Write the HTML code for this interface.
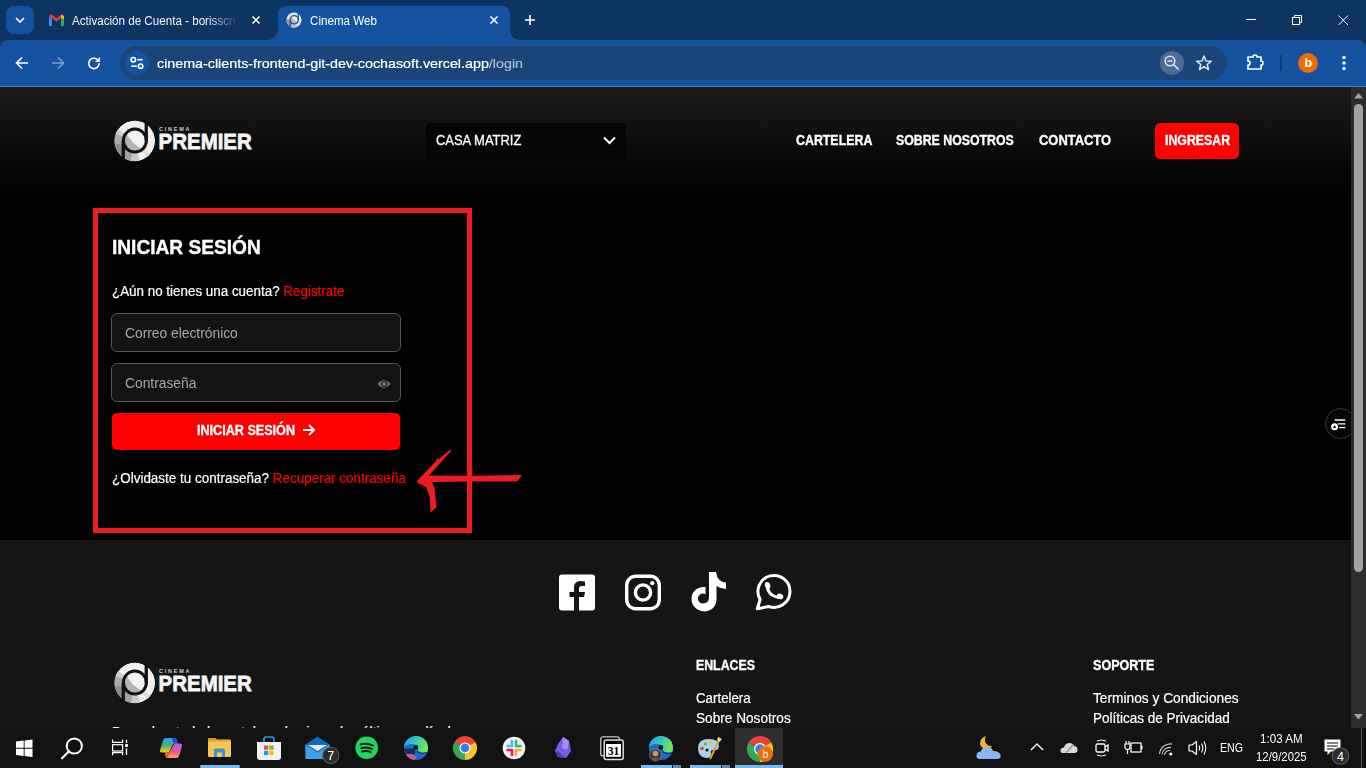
<!DOCTYPE html>
<html><head><meta charset="utf-8">
<style>
*{margin:0;padding:0;box-sizing:border-box}
html,body{width:1366px;height:768px;overflow:hidden;background:#000;font-family:"Liberation Sans",sans-serif}
.a{position:absolute;white-space:nowrap}
svg{position:absolute;overflow:visible}
#tabs{position:absolute;left:0;top:0;width:1366px;height:50px;background:#0e3461}
#toolbar{position:absolute;left:0;top:40px;width:1366px;height:46px;background:#1553a0;border-radius:8px 8px 0 0}
#tline{position:absolute;left:0;top:86px;width:1366px;height:1px;background:#4a80c4}
#omni{position:absolute;left:120px;top:46px;width:1107px;height:34px;background:#1b4478;border-radius:17px}
#page{position:absolute;left:0;top:87px;width:1351px;height:641px;background:#000;overflow:hidden}
#hdr{position:absolute;left:0;top:0;width:1351px;height:120px;background:linear-gradient(#1b1b1b,#000)}
#footer{position:absolute;left:0;top:453px;width:1351px;height:300px;background:#141414}
#sb{position:absolute;left:1351px;top:87px;width:15px;height:641px;background:#2c2c2c}
#task{position:absolute;left:0;top:728px;width:1366px;height:40px;background:#111}
.nav{color:#fff;font-weight:bold;font-size:14px;-webkit-text-stroke:0.35px #fff}
</style></head><body>
<div id="tabs"></div>
<!-- tab search -->
<div class="a" style="left:6px;top:6px;width:28px;height:28px;border-radius:8px;background:#1553a0"></div>
<svg style="left:0;top:0" width="40" height="40"><path d="M16 18 L20 22 L24 18" fill="none" stroke="#fff" stroke-width="1.6"/></svg>
<!-- inactive tab -->
<svg style="left:49px;top:14px" width="15" height="12" viewBox="0 0 15 12">
<path d="M0 2 V12 H3 V5 Z" fill="#4285f4"/><path d="M15 2 V12 H12 V5 Z" fill="#34a853"/>
<path d="M0 2 L7.5 7.5 L15 2 L13 0 L7.5 4.5 L2 0 Z" fill="#ea4335"/><path d="M12 1 L15 2 V5 L12 4Z" fill="#fbbc04"/></svg>
<div class="a" id="tab1" style="left:72px;top:14px;font-size:12.5px;color:#f0f4fa;width:184px;overflow:hidden;transform:scaleX(0.93);transform-origin:0 0;-webkit-mask-image:linear-gradient(90deg,#000 80%,transparent 97%)">Activación de Cuenta - borisscruz</div>
<svg style="left:0;top:0" width="300" height="40"><path d="M252.5 16.5 L259.5 23.5 M259.5 16.5 L252.5 23.5" stroke="#fff" stroke-width="1.5"/></svg>
<!-- active tab -->
<svg style="left:266px;top:6px" width="256" height="34" viewBox="0 0 256 34">
<path d="M0 34 Q12 34 12 22 V8 Q12 0 20 0 H236 Q244 0 244 8 V22 Q244 34 256 34 Z" fill="#1553a0"/></svg>
<svg style="left:286px;top:12px;overflow:hidden" width="16" height="16" viewBox="0 0 16 16">
<circle cx="8" cy="8" r="7.6" fill="#e6e6e6"/><path d="M8 8 L0.4 7 A7.6 7.6 0 0 0 6 15.4Z" fill="#9a9a9a"/><path d="M8 8 L4 14.5 A7.6 7.6 0 0 0 11 15Z" fill="#c0c0c0"/>
<circle cx="8.2" cy="7.8" r="4" fill="#b8b8b8"/><path d="M5.5 5 A4 4 0 0 1 11.5 10Z" fill="#f2f2f2"/>
<circle cx="8.2" cy="7.8" r="4.1" fill="none" stroke="#1553a0" stroke-width="1.3"/>
<rect x="3.5" y="7.8" width="1.3" height="7" fill="#1553a0"/><rect x="11.6" y="1" width="1.3" height="7" fill="#1553a0"/></svg>
<div class="a" id="tab2" style="left:310px;top:14px;font-size:12.5px;transform:scaleX(0.93);transform-origin:0 0;color:#fff">Cinema Web</div>
<svg style="left:0;top:0" width="560" height="40"><path d="M490.5 16.5 L497.5 23.5 M497.5 16.5 L490.5 23.5" stroke="#fff" stroke-width="1.5"/>
<path d="M525 20 H535 M530 15 V25" stroke="#fff" stroke-width="1.6"/></svg>
<!-- window controls -->
<svg style="left:1230px;top:0" width="136" height="40">
<path d="M16 19.5 H26" stroke="#fff" stroke-width="1"/>
<rect x="62.5" y="17.5" width="7" height="7" fill="none" stroke="#fff" stroke-width="1"/>
<path d="M64.5 17.5 V15.5 H71.5 V22.5 H69.5" fill="none" stroke="#fff" stroke-width="1"/>
<path d="M108.5 15.5 L118 25 M118 15.5 L108.5 25" stroke="#fff" stroke-width="1"/></svg>

<div id="toolbar"></div>
<div id="tline"></div>
<div id="omni"></div>
<!-- nav buttons -->
<svg style="left:0;top:40px" width="120" height="46">
<path d="M28 23 H17 M22 17.5 L16.5 23 L22 28.5" fill="none" stroke="#fff" stroke-width="1.6"/>
<path d="M52 23 H63 M58 17.5 L63.5 23 L58 28.5" fill="none" stroke="#7b9dcc" stroke-width="1.6"/>
<path d="M99.08 23.35 A5.2 5.2 0 1 1 97.3 19.5" fill="none" stroke="#fff" stroke-width="1.6"/>
<path d="M95 21.9 H99.9 V17 Z" fill="#fff"/></svg>
<div class="a" style="left:125px;top:51px;width:24px;height:24px;border-radius:12px;background:#1553a0"></div>
<svg style="left:125px;top:51px" width="24" height="24">
<circle cx="8.3" cy="8.7" r="2.2" fill="none" stroke="#fff" stroke-width="1.6"/><path d="M12.2 8.7 H17.7" stroke="#fff" stroke-width="1.6"/>
<circle cx="15.6" cy="15.2" r="2.2" fill="none" stroke="#fff" stroke-width="1.6"/><path d="M6.3 15.2 H11.8" stroke="#fff" stroke-width="1.6"/></svg>
<div class="a" id="url" style="left:157px;top:55.5px;font-size:13.5px;transform:scaleX(1.058);transform-origin:0 0;-webkit-text-stroke:0.2px currentColor;color:#fff">cinema-clients-frontend-git-dev-cochasoft.vercel.app<span id="url2" style="color:#a9bbd6">/login</span></div>
<!-- omnibox right -->
<div class="a" style="left:1160px;top:51px;width:24px;height:24px;border-radius:12px;background:#4b6a95"></div>
<svg style="left:1150px;top:40px" width="216" height="46">
<circle cx="20" cy="21" r="4.8" fill="none" stroke="#dfe6f0" stroke-width="1.6"/><path d="M17.5 21 H22.5" stroke="#dfe6f0" stroke-width="1.4"/>
<path d="M23.5 24.5 L28.5 29.5" stroke="#dfe6f0" stroke-width="1.7"/>
<path d="M54 16 L56 21 L61.3 21.2 L57.2 24.5 L58.6 29.6 L54 26.7 L49.4 29.6 L50.8 24.5 L46.7 21.2 L52 21 Z" fill="none" stroke="#dfe6f0" stroke-width="1.5" stroke-linejoin="round"/>
<path d="M98 17 H103 A2 2 0 0 1 107 17 H111 V21 A2 2 0 0 1 111 25 V29 H98 V25 A2 2 0 0 0 98 21 Z" fill="none" stroke="#fff" stroke-width="1.7" stroke-linejoin="round"/>
<path d="M131 15 V31" stroke="#0e3461" stroke-width="1.5"/>
<circle cx="158" cy="23" r="10" fill="#ef6c00"/>
<circle cx="194" cy="17.5" r="1.7" fill="#fff"/><circle cx="194" cy="23" r="1.7" fill="#fff"/><circle cx="194" cy="28.5" r="1.7" fill="#fff"/></svg>
<div class="a" style="left:1304.5px;top:56px;font-size:12.5px;font-weight:bold;color:#fff">b</div>

<svg width="0" height="0" style="position:absolute">
<defs>
<linearGradient id="lg1" x1="0" y1="0" x2="1" y2="1"><stop offset="0" stop-color="#fafafa"/><stop offset="1" stop-color="#d0d0d0"/></linearGradient>
<symbol id="logo" viewBox="0 0 142 42">
  <clipPath id="lclip"><circle cx="21.75" cy="20.9" r="20.35"/></clipPath>
  <clipPath id="iclip"><circle cx="21.9" cy="20.6" r="11"/></clipPath>
  <g clip-path="url(#lclip)"><circle cx="21.75" cy="20.9" r="20.35" fill="#efefef"/><path d="M21.75 20.9 L2.39 13.85 A20.6 20.6 0 0 1 5.08 8.79 Z" fill="#cdcdcd"/><path d="M21.75 20.9 L1.46 24.48 A20.6 20.6 0 0 1 2.39 13.85 Z" fill="#a9a9a9"/><path d="M21.75 20.9 L8.51 36.68 A20.6 20.6 0 0 1 1.46 24.48 Z" fill="#8e8e8e"/><path d="M21.75 20.9 L18.17 41.19 A20.6 20.6 0 0 1 8.51 36.68 Z" fill="#a2a2a2"/><path d="M21.75 20.9 L26.73 40.89 A20.6 20.6 0 0 1 18.17 41.19 Z" fill="#c9c9c9"/><path d="M21.75 20.9 L37.53 34.14 A20.6 20.6 0 0 1 34.43 37.13 Z" fill="#dadada"/></g>
  <g clip-path="url(#iclip)"><circle cx="21.9" cy="20.6" r="11.5" fill="#b3b3b3"/><circle cx="47" cy="-5" r="38.5" fill="#f3f3f3"/></g>
  <circle cx="21.9" cy="20.6" r="11.5" fill="none" stroke="#111" stroke-width="3"/>
  <rect x="8.6" y="20.6" width="3.3" height="19.5" fill="#111"/>
  <rect x="31.6" y="2" width="3.3" height="18.6" fill="#111"/>
  <text x="46" y="10.5" font-family="Liberation Sans" font-weight="bold" font-size="5.4" letter-spacing="1.85" fill="#cfcfcf">CINEMA</text>
  <text x="45.6" y="29.5" font-family="Liberation Sans" font-weight="bold" font-size="22.6" fill="#f5f5f5" stroke="#f5f5f5" stroke-width="0.75" transform="translate(45.6 0) scale(0.905 1) translate(-45.6 0)">PREMIER</text>
</symbol>
</defs></svg>

<div class="a" style="left:0;top:87px;width:1351px;height:453px;background:#000"></div>
<div class="a" style="left:0;top:87px;width:1351px;height:108px;background:linear-gradient(#1b1b1b,#000)"></div>
<div class="a" style="left:0;top:540px;width:1351px;height:188px;background:#151515"></div>

<!-- header -->
<svg style="left:113px;top:120px" width="142" height="42"><use href="#logo"/></svg>
<div class="a" style="left:426px;top:123px;width:200px;height:36px;background:#050505;border-radius:5px"></div>
<div class="a" id="casa" style="-webkit-text-stroke:0.3px #fff;left:436px;top:132px;transform:scaleX(0.924);transform-origin:0 0;font-size:14px;color:#fff">CASA MATRIZ</div>
<svg style="left:600px;top:132px" width="20" height="16"><path d="M4 5.5 L9.5 11 L15 5.5" fill="none" stroke="#fff" stroke-width="2"/></svg>
<div class="a nav" id="n1" style="left:796px;top:132px;transform:scaleX(0.884);transform-origin:0 0">CARTELERA</div>
<div class="a nav" id="n2" style="left:896px;top:132px;transform:scaleX(0.88);transform-origin:0 0">SOBRE NOSOTROS</div>
<div class="a nav" id="n3" style="left:1039px;top:132px;transform:scaleX(0.923);transform-origin:0 0">CONTACTO</div>
<div class="a" style="left:1155px;top:123px;width:84px;height:36px;background:#fe0000;border-radius:5px"></div>
<div class="a nav" id="n4" style="left:1164.5px;top:132px;transform:scaleX(0.88);transform-origin:0 0">INGRESAR</div>

<!-- login -->
<div class="a" style="left:93px;top:208px;width:379px;height:325px;border:5px solid #ec1c24"></div>
<div class="a" id="t1" style="-webkit-text-stroke:0.4px #fff;left:112px;top:236px;transform:scaleX(0.956);transform-origin:0 0;font-size:20px;font-weight:bold;color:#fff">INICIAR SESIÓN</div>
<div class="a" id="t2" style="-webkit-text-stroke:0.2px currentColor;left:112px;top:283px;transform:scaleX(0.957);transform-origin:0 0;font-size:14px;color:#fff">¿Aún no tienes una cuenta? <span style="color:#fe0000">Registrate</span></div>
<div class="a" style="left:111px;top:313px;width:290px;height:39px;background:#131313;border:1.5px solid #575757;border-radius:6px"></div>
<div class="a" id="ph1" style="left:125px;top:325px;transform:scaleX(0.986);transform-origin:0 0;font-size:14px;color:#a3a8b0">Correo electrónico</div>
<div class="a" style="left:111px;top:363px;width:290px;height:39px;background:#131313;border:1.5px solid #575757;border-radius:6px"></div>
<div class="a" id="ph2" style="left:125px;top:375px;transform:scaleX(0.986);transform-origin:0 0;font-size:14px;color:#a3a8b0">Contraseña</div>
<svg style="left:376px;top:376px" width="16" height="16" viewBox="0 0 16 16"><path d="M1.5 8 Q8 0.5 14.5 8 Q8 15.5 1.5 8 Z" fill="#6b7280"/><circle cx="8.3" cy="8" r="3" fill="#131313"/><circle cx="8.3" cy="8" r="2" fill="#6b7280"/></svg>
<div class="a" style="left:112px;top:413px;width:288px;height:37px;background:#fe0000;border-radius:5px"></div>
<div class="a nav" id="b1" style="left:196.5px;top:422px;transform:scaleX(0.9);transform-origin:0 0">INICIAR SESIÓN</div>
<svg style="left:300px;top:421px" width="18" height="18"><path d="M3 9 H14 M9 4 L14 9 L9 14" fill="none" stroke="#fff" stroke-width="2"/></svg>
<div class="a" id="t3" style="-webkit-text-stroke:0.2px currentColor;left:112px;top:470px;transform:scaleX(0.961);transform-origin:0 0;font-size:14px;color:#fff">¿Olvidaste tu contraseña? <span style="color:#fe0000">Recuperar contraseña</span></div>
<!-- hand drawn arrow -->
<svg style="left:400px;top:440px" width="140" height="80" viewBox="0 0 140 80">
<path d="M16.5 41.5 L36 21 L37.5 17.5 L38.5 19.5 L50 9.8 L51.5 10.5 L29 35.5 L70 35.8 L122 35 L117 41.5 L70 41.5 L32 42 L34.5 48 L36.5 67.5 L30.5 72.5 L29.5 56 L26 47 L19 43.5 Z" fill="#ec1c24"/>
</svg>
<!-- footer -->
<svg style="left:559px;top:574px" width="36" height="37" viewBox="0 0 36 37"><rect x="0" y="0.5" width="36" height="36" rx="3" fill="#fff"/><path d="M20 37 V23 H25 L26 18 H20 V14.5 Q20 12 23 12 H26 V7.5 Q24 7 21.5 7 Q15 7 15 13.5 V18 H10.5 V23 H15 V37 Z" fill="#151515"/></svg>
<svg style="left:625px;top:574px" width="36" height="37" viewBox="0 0 36 37"><rect x="1.7" y="2.2" width="32.6" height="32.6" rx="9" fill="none" stroke="#fff" stroke-width="3.4"/><circle cx="18" cy="18.5" r="7.6" fill="none" stroke="#fff" stroke-width="3.4"/><circle cx="27.3" cy="9.2" r="2.1" fill="#fff"/></svg>
<svg style="left:690px;top:571px" width="38" height="42" viewBox="0 0 38 42"><path d="M19 1 H26 Q26.5 6 29.5 9 Q32.5 11.5 36 11.5 V18 Q31 18 26.5 15 V28 Q26.5 35 21 38.5 Q15 42 8.5 39 Q1 35 1.5 27 Q2 20 8.5 17 Q12 15.5 15.5 16 V23 Q12 22 10 23.5 Q7.5 25.5 8 28.5 Q9 32.5 13 32.5 Q19 32.5 19 26 Z" fill="#fff"/></svg>
<svg style="left:755px;top:573px" width="38" height="38" viewBox="0 0 38 38"><path d="M2.3 35.8 L5.14 26.5 A16 16 0 1 1 13.5 33.5 Z" fill="none" stroke="#fff" stroke-width="3" stroke-linejoin="round"/>
<path d="M12.3 13.5 Q13 22.5 23.5 24.5" fill="none" stroke="#fff" stroke-width="3.2" stroke-linecap="round"/>
<ellipse cx="12.6" cy="12.4" rx="2.6" ry="3.4" transform="rotate(-25 12.6 12.4)" fill="#fff"/>
<ellipse cx="25" cy="23.4" rx="3.4" ry="2.6" transform="rotate(25 25 23.4)" fill="#fff"/></svg>

<svg style="left:113px;top:662px" width="142" height="42"><use href="#logo"/></svg>
<div class="a" id="f0" style="-webkit-text-stroke:0.2px currentColor;left:112px;top:724px;font-size:14px;color:#fff">Descubre toda la cartelera de cine y las últimas películas</div>
<div class="a" id="f1" style="-webkit-text-stroke:0.35px #fff;left:696px;top:657px;transform:scaleX(0.88);transform-origin:0 0;font-size:14px;font-weight:bold;color:#fff">ENLACES</div>
<div class="a" id="f2" style="-webkit-text-stroke:0.2px currentColor;left:696px;top:690px;transform:scaleX(0.95);transform-origin:0 0;font-size:14px;color:#fff">Cartelera</div>
<div class="a" id="f3" style="-webkit-text-stroke:0.2px currentColor;left:696px;top:710px;transform:scaleX(0.974);transform-origin:0 0;font-size:14px;color:#fff">Sobre Nosotros</div>
<div class="a" id="f4" style="-webkit-text-stroke:0.35px #fff;left:1093px;top:657px;transform:scaleX(0.897);transform-origin:0 0;font-size:14px;font-weight:bold;color:#fff">SOPORTE</div>
<div class="a" id="f5" style="-webkit-text-stroke:0.2px currentColor;left:1093px;top:690px;transform:scaleX(0.98);transform-origin:0 0;font-size:14px;color:#fff">Terminos y Condiciones</div>
<div class="a" id="f6" style="-webkit-text-stroke:0.2px currentColor;left:1093px;top:710px;transform:scaleX(0.965);transform-origin:0 0;font-size:14px;color:#fff">Políticas de Privacidad</div>

<!-- floating button -->
<div class="a" style="left:1325px;top:408px;width:31px;height:31px;border-radius:16px;background:#050505;border:1px solid #3a3a3a"></div>
<svg style="left:1325px;top:408px" width="31" height="31"><path d="M9.7 12 H20.3 M13 15.8 H20.3 M14.3 19.7 H20.3" stroke="#fff" stroke-width="1.3"/><circle cx="9.6" cy="18.7" r="3.5" fill="#fff"/><path d="M9.6 16.9 L11.2 19.9 H8 Z" fill="#000"/></svg>
<!-- scrollbar -->
<div class="a" style="left:1351px;top:87px;width:15px;height:641px;background:#2c2c2c"></div>
<svg style="left:1351px;top:87px" width="15" height="641"><path d="M3 11.5 L7.5 6 L12 11.5 Z" fill="#a3a3a3"/><path d="M3 627 L12 627 L7.5 632.5 Z" fill="#a3a3a3"/></svg>
<div class="a" style="left:1354px;top:104px;width:9px;height:468px;border-radius:4.5px;background:#a3a3a3"></div>

<div class="a" style="left:0;top:728px;width:1366px;height:40px;background:#121212"></div>
<!-- start -->
<svg style="left:16px;top:740px" width="17" height="17" viewBox="0 0 17 17"><path d="M0 1.6 L7.7 0.6 V7.8 H0 Z M8.6 0.5 L16.5 -0.5 V7.8 H8.6 Z M0 8.7 H7.7 V15.9 L0 14.9 Z M8.6 8.7 H16.5 V17 L8.6 16 Z" fill="#fff"/></svg>
<!-- search -->
<svg style="left:58px;top:734px" width="28" height="28"><circle cx="16.3" cy="12" r="7.6" fill="none" stroke="#fff" stroke-width="2"/><path d="M10.8 17.5 L4 24.3" stroke="#fff" stroke-width="2.2" stroke-linecap="round"/></svg>
<!-- task view -->
<svg style="left:110px;top:738px" width="20" height="20"><path d="M2.6 1.6 V4.3 H12.6 V1.6 M2.6 17.2 V14.7 H12.6 V17.2" fill="none" stroke="#fff" stroke-width="1.2"/><rect x="2.6" y="6.7" width="10" height="6.3" fill="none" stroke="#fff" stroke-width="1.2"/><path d="M16.5 1.8 V5 M16.5 10.2 V17" stroke="#fff" stroke-width="1.3"/><rect x="15.1" y="6.1" width="2.9" height="2.8" fill="#fff"/></svg>
<!-- copilot -->
<svg style="left:155px;top:733px" width="32" height="30" viewBox="0 0 32 30">
<defs><linearGradient id="cpa" x1="0" y1="0" x2="0" y2="1"><stop offset="0" stop-color="#1ea4f2"/><stop offset=".5" stop-color="#43b37a"/><stop offset="1" stop-color="#f5d300"/></linearGradient>
<linearGradient id="cpb" x1="0" y1="0" x2="0" y2="1"><stop offset="0" stop-color="#b05ff0"/><stop offset=".55" stop-color="#f0568f"/><stop offset="1" stop-color="#fba35a"/></linearGradient></defs>
<path d="M10 5 H19.5 Q21.5 5 22 7 L22.5 10.5 H18.5 L14 19.5 H7 Q4.5 19.5 5 17 L8 7.5 Q8.6 5 10 5 Z" fill="url(#cpa)"/>
<path d="M17 5 H19.5 Q21.5 5 22 7 L22.5 10.5 H18.5 Z" fill="#1b4fd8"/>
<path d="M19.5 10.5 H25 Q27.5 10.5 27 13 L24 23 Q23.3 25 21.5 25 H12.5 Q11 25 10.5 23 L10 19.5 H14.5 Z" fill="url(#cpb)"/>
<path d="M10 19.5 H14.5 L13 25 H12.5 Q11 25 10.5 23 Z" fill="#f0583a"/></svg>
<!-- explorer -->
<svg style="left:208px;top:738px" width="23" height="19" viewBox="0 0 23 19"><path d="M0 1.5 Q0 0 1.5 0 H7 L9 1.5 H21.5 Q23 1.5 23 3 V17.5 Q23 19 21.5 19 H1.5 Q0 19 0 17.5Z" fill="#f6c94e"/><path d="M0 3 H23" stroke="#e0a82e" stroke-width="1.5"/><path d="M0 1.5 Q0 0 1.5 0 H7 L9 2.5 H0Z" fill="#d99b1b"/><path d="M6 19 V12 Q6 10.5 7.5 10.5 H15.5 Q17 10.5 17 12 V19 H14 V14.5 H9 V19Z" fill="#3f8fdd"/></svg>
<div class="a" style="left:200px;top:765px;width:40px;height:3px;background:#76b9ed;border-radius:1.5px"></div>
<!-- store -->
<svg style="left:257px;top:736px" width="24" height="25" viewBox="0 0 24 25"><path d="M7 6 V3 Q7 1 9 1 H15 Q17 1 17 3 V6" fill="none" stroke="#1e9ee8" stroke-width="1.6"/><path d="M0 6 H24 V21 Q24 24 21 24 H3 Q0 24 0 21Z" fill="#f2f2f2"/><rect x="7" y="9.5" width="4.3" height="4.3" fill="#f35325"/><rect x="12.3" y="9.5" width="4.3" height="4.3" fill="#81bc06"/><rect x="7" y="14.8" width="4.3" height="4.3" fill="#05a6f0"/><rect x="12.3" y="14.8" width="4.3" height="4.3" fill="#ffba08"/></svg>
<!-- mail -->
<svg style="left:305px;top:736px" width="36" height="30" viewBox="0 0 36 30"><path d="M0.5 8.5 L12.5 0.5 L24.5 8.5 V23 H0.5Z" fill="#0f6cbd"/><path d="M3 9 H22 L12.5 15Z" fill="#e8e8e8"/><path d="M0.5 8.5 L12.5 16.5 L24.5 8.5 V23 H0.5Z" fill="#3aa3ec"/>
<circle cx="25.8" cy="19.4" r="8.1" fill="#2b2b2b" stroke="#5a5a5a" stroke-width="1.1"/><text x="25.8" y="24" text-anchor="middle" font-family="Liberation Sans" font-size="12.5" fill="#fff">7</text></svg>
<!-- spotify -->
<svg style="left:355px;top:736px" width="24" height="24"><circle cx="11.7" cy="11.8" r="11.3" fill="#1ed760"/><path d="M5.5 8.5 Q12 6.5 18 9.5 M6.3 12.2 Q12 10.5 17 13 M7 15.5 Q11.5 14.2 15.8 16.2" fill="none" stroke="#121212" stroke-width="1.9" stroke-linecap="round"/></svg>
<!-- edge -->
<svg style="left:400px;top:732px" width="32" height="32" viewBox="0 0 32 32">
<defs><linearGradient id="eg1" x1="0" y1="0" x2="1" y2="0.3"><stop offset="0" stop-color="#2a9fe6"/><stop offset=".5" stop-color="#2fc3c8"/><stop offset="1" stop-color="#74e35a"/></linearGradient>
<clipPath id="edc"><circle cx="16" cy="16" r="12"/></clipPath></defs>
<g clip-path="url(#edc)">
<rect x="4" y="4" width="24" height="24" fill="#1a6bd0"/>
<path d="M4 4 H28 V20 Q25 21 21.5 20.5 Q17.5 19.5 17.5 16 Q17 12.5 12.5 12 Q7 12 4 15 Z" fill="url(#eg1)"/>
<path d="M17 19.5 Q19.5 21.5 23 21.3 Q26 21 28 20.5" fill="none" stroke="#0a2a5a" stroke-width="1"/>
<circle cx="15.9" cy="15.4" r="2.3" fill="#0b0b0b"/>
<rect x="4" y="16.5" width="11" height="6" fill="#1e2d58"/>
<ellipse cx="9.5" cy="25.5" rx="6.5" ry="3.5" fill="#d25a94"/>
</g></svg>
<!-- chrome -->
<svg style="left:453px;top:736px" width="24" height="24" viewBox="0 0 24 24">
<path d="M12 12 L1.6 6 A12 12 0 0 1 22.4 6 Z" fill="#ea4335"/>
<path d="M12 12 L22.4 6 A12 12 0 0 1 12 24 Z" fill="#fbc02d"/>
<path d="M12 12 L12 24 A12 12 0 0 1 1.6 6 Z" fill="#34a853"/>
<circle cx="12" cy="12" r="5.6" fill="#fff"/><circle cx="12" cy="12" r="4.4" fill="#3b7cf0"/></svg>
<!-- slack -->
<svg style="left:502px;top:736px" width="24" height="24" viewBox="0 0 24 24"><circle cx="12" cy="12" r="11.3" fill="#f2f2f2"/>
<path d="M10 5 V10 M5.5 10 H10" stroke="#36c5f0" stroke-width="2.6" stroke-linecap="round"/>
<path d="M14 5 V10 M14 10 H18.5" stroke="#2eb67d" stroke-width="2.6" stroke-linecap="round"/>
<path d="M14 14 H18.5 M14 14 V19" stroke="#ecb22e" stroke-width="2.6" stroke-linecap="round"/>
<path d="M10 14 V19 M5.5 14 H10" stroke="#e01e5a" stroke-width="2.6" stroke-linecap="round"/></svg>
<!-- obsidian -->
<svg style="left:554px;top:736px" width="18" height="24" viewBox="0 0 18 24"><path d="M9 1 L15 5 L17 15 L12 22 L4 21 L1 15 L4 8Z" fill="#7b5ce0"/><path d="M9 1 L15 5 L13 14 L8 12Z" fill="#a88bf5"/><path d="M4 15 L12 22 L4 21 L1 15Z" fill="#5a3bbf"/></svg>
<!-- calendar -->
<svg style="left:596px;top:733px" width="32" height="30" viewBox="0 0 32 30"><rect x="4.8" y="3.8" width="18.5" height="19" rx="2" fill="#000" stroke="#cfcfcf" stroke-width="1.3"/><rect x="8.2" y="7" width="19" height="19.5" rx="2" fill="#000" stroke="#e0e0e0" stroke-width="1.5"/><rect x="10" y="11" width="15" height="12.8" fill="#fff"/><text x="17.5" y="22" text-anchor="middle" font-family="Liberation Serif" font-weight="bold" font-size="11.5" fill="#000">31</text></svg>
<!-- edge 2 -->
<svg style="left:645px;top:732px" width="32" height="32" viewBox="0 0 32 32">
<g clip-path="url(#edc)">
<rect x="4" y="4" width="24" height="24" fill="#1a6bd0"/>
<path d="M4 4 H28 V20 Q25 21 21.5 20.5 Q17.5 19.5 17.5 16 Q17 12.5 12.5 12 Q7 12 4 15 Z" fill="url(#eg1)"/>
<path d="M17 19.5 Q19.5 21.5 23 21.3 Q26 21 28 20.5" fill="none" stroke="#0a2a5a" stroke-width="1"/>
<circle cx="15.9" cy="15.4" r="2.3" fill="#0b0b0b"/>
</g>
<circle cx="10.5" cy="23" r="6" fill="#3a3a3a" stroke="#8a8a8a" stroke-width=".7"/><circle cx="10.5" cy="21.5" r="2.8" fill="#c4957a"/><path d="M6 27.5 Q10.5 23 15 27.5 Q10.5 29.5 6 27.5Z" fill="#7a4a38"/></svg>
<div class="a" style="left:641px;top:765px;width:31px;height:3px;background:#76b9ed"></div>
<div class="a" style="left:673px;top:765px;width:8px;height:3px;background:#5a8ab5"></div>
<!-- paint -->
<svg style="left:697px;top:736px" width="25" height="25" viewBox="0 0 25 25"><path d="M12 3 Q22 3 22 10 Q22 15 16 14 Q13 14 14 18 Q14 22 9 22 Q1 21 1 12 Q1 3 12 3Z" fill="#a8d4f0"/><circle cx="5" cy="12.5" r="1.8" fill="#e53935"/><circle cx="8.5" cy="8" r="1.8" fill="#7cb342"/><circle cx="13.5" cy="6.5" r="1.8" fill="#fbc02d"/><circle cx="10" cy="14" r="1.5" fill="#121212"/><path d="M23 2 L13 23" stroke="#e39b3a" stroke-width="2"/><path d="M21 1 L25 3 L22.5 6 L20 4.5Z" fill="#f3d28a"/></svg>
<div class="a" style="left:690px;top:765px;width:31px;height:3px;background:#76b9ed"></div>
<div class="a" style="left:722px;top:765px;width:8px;height:3px;background:#5a8ab5"></div>
<!-- chrome active -->
<div class="a" style="left:735px;top:728px;width:48px;height:40px;background:#2d2d2d"></div>
<div class="a" style="left:735px;top:765px;width:48px;height:3px;background:#76b9ed"></div>
<svg style="left:747px;top:736px" width="26" height="26" viewBox="0 0 24 24">
<path d="M12 12 L1.6 6 A12 12 0 0 1 22.4 6 Z" fill="#ea4335"/>
<path d="M12 12 L22.4 6 A12 12 0 0 1 12 24 Z" fill="#fbc02d"/>
<path d="M12 12 L12 24 A12 12 0 0 1 1.6 6 Z" fill="#34a853"/>
<circle cx="12" cy="12" r="5.6" fill="#fff"/><circle cx="12" cy="12" r="4.4" fill="#3b7cf0"/></svg>
<svg style="left:757px;top:746px" width="17" height="17"><circle cx="8.3" cy="8" r="7.8" fill="#e8710a"/><text x="8.3" y="11.8" text-anchor="middle" font-family="Liberation Sans" font-size="10.5" fill="#fff">b</text></svg>

<!-- tray -->
<svg style="left:975px;top:735px" width="28" height="26" viewBox="0 0 28 26"><path d="M11 1 Q5 3 5 9 Q6 14 12 14 Q16 14 17 11 Q11 11 10 6 Q10 3 11 1Z" fill="#f5b02e"/><path d="M5 24 Q1 24 1.5 20 Q2 16.5 6 16.5 Q7 12 12 12 Q17 12 18 16 Q23 15.5 25.5 19.5 Q26.5 24 22 24Z" fill="#8ab9f1"/></svg>
<svg style="left:1028px;top:740px" width="18" height="14"><path d="M3 10 L9 4 L15 10" fill="none" stroke="#fff" stroke-width="1.3"/></svg>
<svg style="left:1060px;top:740px" width="19" height="15"><path d="M3 13 Q0 13 0.5 10 Q1 7.5 4 7.5 Q5 3 9.5 3 Q13 3 14 6 Q17.5 6 17.5 10 Q17.5 13 14.5 13Z" fill="#d8d8d8"/><path d="M6 13 L13 5" stroke="#9a9a9a" stroke-width="1.5"/></svg>
<svg style="left:1094px;top:739px" width="16" height="18"><rect x="2" y="5" width="9" height="8" rx="1.5" fill="none" stroke="#fff" stroke-width="1.3"/><path d="M11 8 L14 6 V12 L11 10" fill="none" stroke="#fff" stroke-width="1.3"/><path d="M3 2 Q7.5 0 12 2 M3 16 Q7.5 18 12 16" fill="none" stroke="#fff" stroke-width="1"/></svg>
<svg style="left:1124px;top:740px" width="20" height="16"><path d="M2 1 V4 M5 1 V4 M1 4 H6 V7 Q6 9.5 3.5 9.5 Q1 9.5 1 7Z M3.5 9.5 V14" fill="none" stroke="#fff" stroke-width="1.2"/><rect x="7" y="3" width="10" height="9" fill="none" stroke="#fff" stroke-width="1.2"/><rect x="17" y="5.5" width="1.5" height="4" fill="#fff"/></svg>
<svg style="left:1158px;top:741px" width="16" height="16"><path d="M1.5 13 A11 11 0 0 1 14 3 M4 13.5 A8 8 0 0 1 13 6.5 M6.5 14 A5.5 5.5 0 0 1 12 9.5" fill="none" stroke="#cfcfcf" stroke-width="1.1"/><circle cx="12.8" cy="13" r="1.6" fill="#fff"/></svg>
<svg style="left:1188px;top:740px" width="20" height="16"><path d="M1 5 H4 L8.5 1.5 V14.5 L4 11 H1Z" fill="none" stroke="#fff" stroke-width="1.2" stroke-linejoin="round"/><path d="M11 5.5 Q12.5 8 11 10.5 M13.5 3.5 Q16 8 13.5 12.5 M16 1.5 Q19.5 8 16 14.5" fill="none" stroke="#fff" stroke-width="1.1"/></svg>
<div class="a" id="eng" style="left:1219.5px;top:741px;transform:scaleX(0.85);transform-origin:0 0;font-size:12.5px;color:#fff">ENG</div>
<div class="a" id="clk1" style="left:1260px;top:732px;transform:scaleX(0.93);transform-origin:0 0;font-size:12.5px;color:#fff">1:03 AM</div>
<div class="a" id="clk2" style="left:1255.5px;top:750px;transform:scaleX(0.91);transform-origin:0 0;font-size:12.5px;color:#fff">12/9/2025</div>
<svg style="left:1324px;top:739px" width="28" height="26"><path d="M0.5 0.5 H16.5 V12.5 H7 L3.5 16 V12.5 H0.5Z" fill="#fff"/><path d="M3 4 H14 M3 7 H14 M3 10 H10" stroke="#121212" stroke-width="1.2"/><circle cx="16.4" cy="17" r="8.3" fill="#2b2b2b" stroke="#5a5a5a" stroke-width="1.1"/><text x="16.4" y="21.5" text-anchor="middle" font-family="Liberation Sans" font-size="12.5" fill="#fff">4</text></svg>
<div class="a" style="left:1361px;top:728px;width:1px;height:40px;background:#5a5a5a"></div>
</body></html>
